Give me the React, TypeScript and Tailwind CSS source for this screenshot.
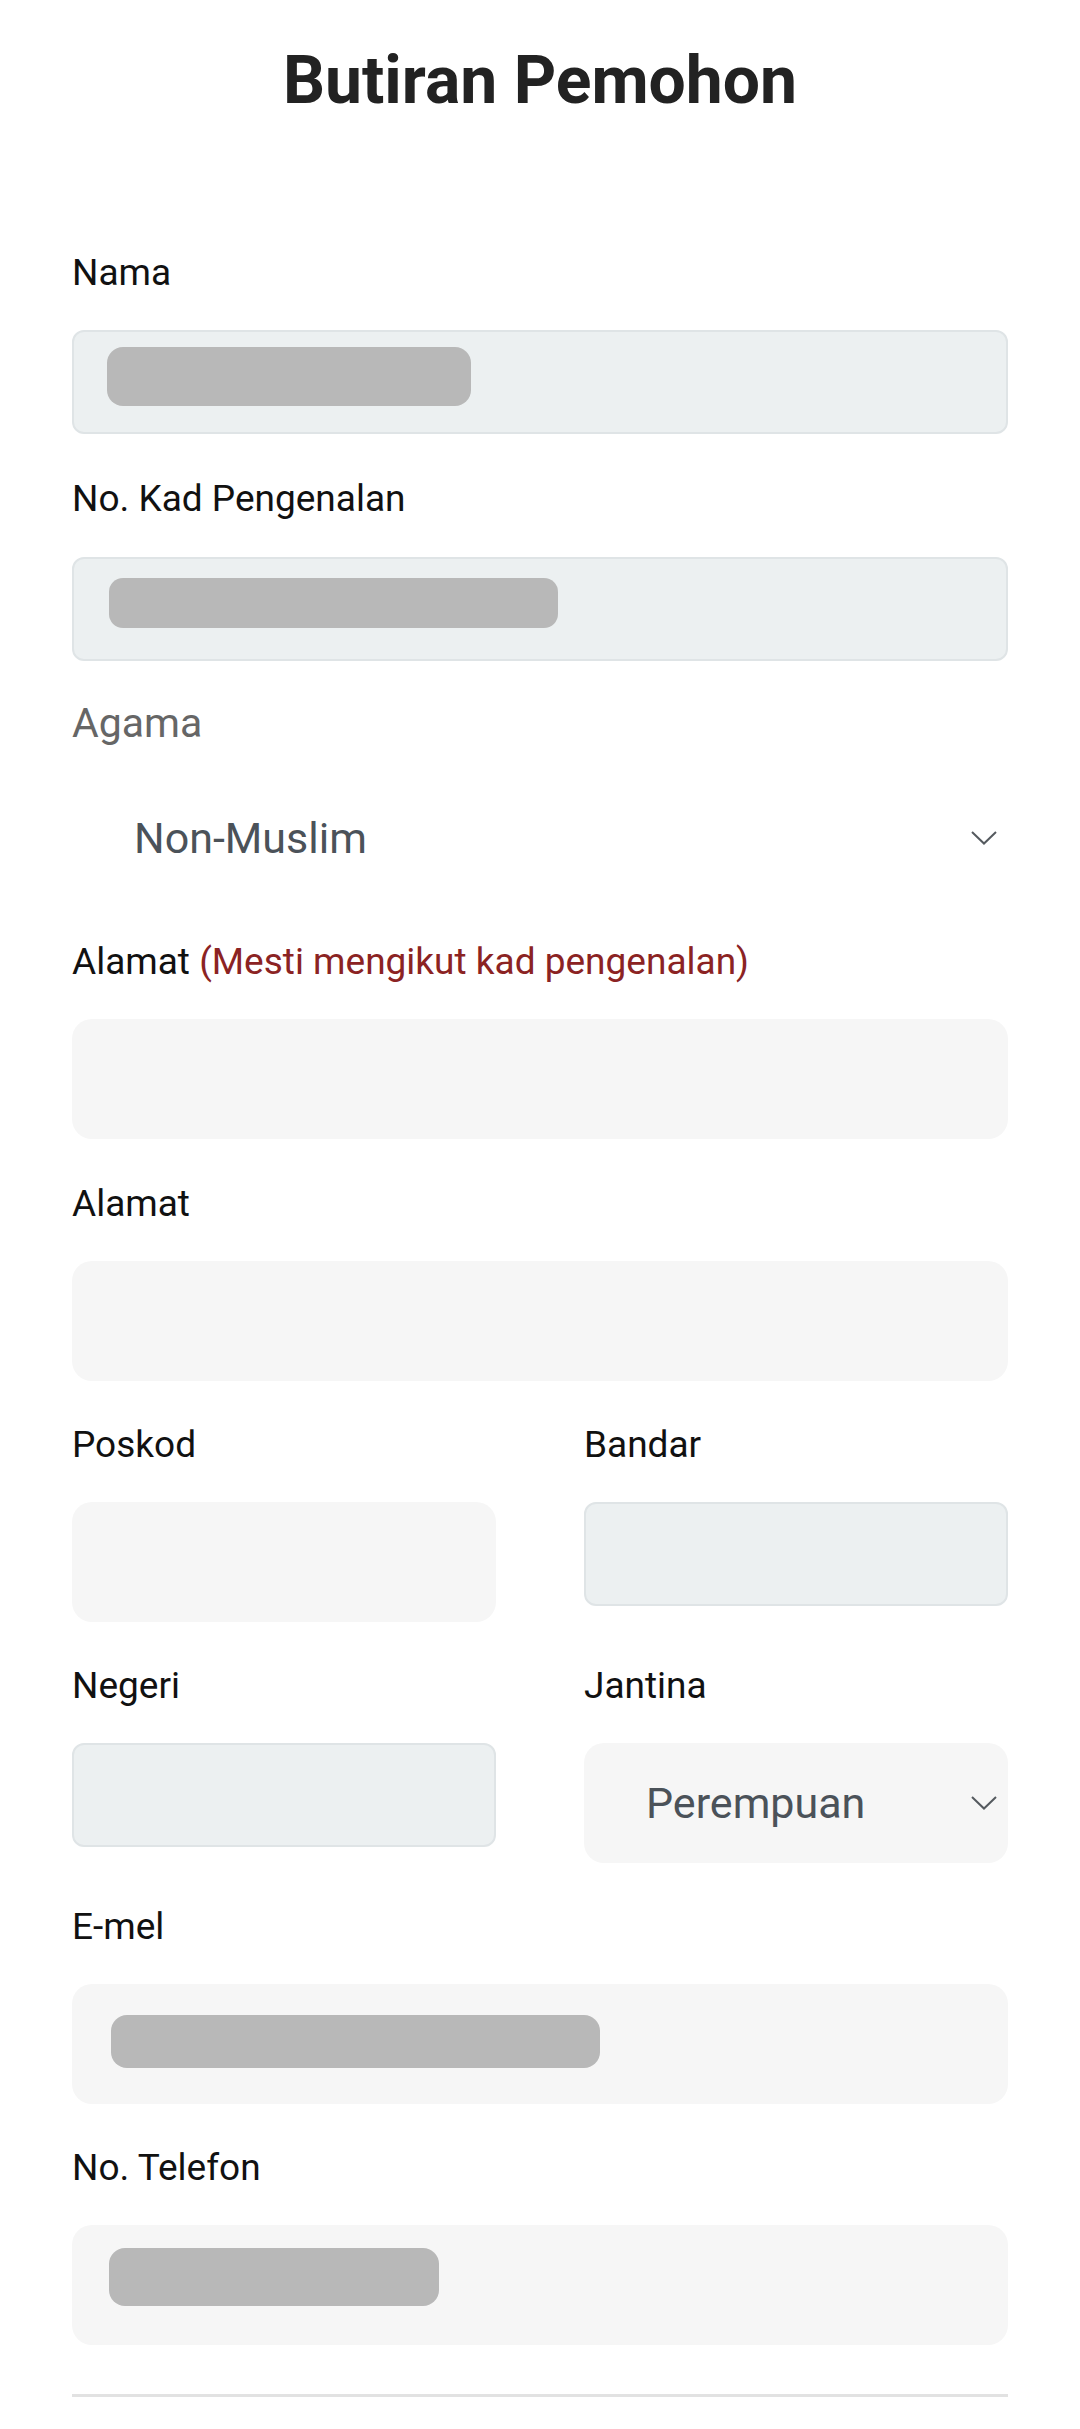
import React from "react";

const font = { fontFamily: "Roboto, 'Noto Sans', sans-serif" };

function Label({ children }: { children: React.ReactNode }) {
  return (
    <div className="text-[37px] leading-[48px] text-[#111]">{children}</div>
  );
}

function Chevron() {
  return (
    <svg width="26" height="14" viewBox="0 0 26 14" fill="none">
      <polyline
        points="1,1 13,12.5 25,1"
        stroke="#555a5f"
        strokeWidth="2"
        strokeLinejoin="miter"
      />
    </svg>
  );
}

function Select({ value, filled }: { value: string; filled?: boolean }) {
  return (
    <div
      className={`h-[120px] rounded-[20px] flex items-center pl-[62px] pr-[11px] ${
        filled ? "bg-[#f6f6f6]" : "bg-white"
      }`}
    >
      <span className="flex-1 text-[43px] text-[#4b5259]">{value}</span>
      <Chevron />
    </div>
  );
}

export default function App() {
  return (
    <div className="w-[1080px] min-h-[2429px] bg-white px-[72px]" style={font}>
      <h1 className="pt-[41px] text-center text-[66px] leading-[80px] font-bold text-[#222]">
        Butiran Pemohon
      </h1>

      <div className="mt-[128px]">
        <Label>Nama</Label>
        <div className="mt-[33px] h-[104px] rounded-[12px] border-2 border-[#dfe4e6] bg-[#ecf0f1] pl-[33px] pt-[15px]">
          <div className="w-[364px] h-[59px] rounded-[16px] bg-[#b8b8b8]" />
        </div>
      </div>

      <div className="mt-[41px]">
        <Label>No. Kad Pengenalan</Label>
        <div className="mt-[34px] h-[104px] rounded-[12px] border-2 border-[#dfe4e6] bg-[#ecf0f1] pl-[35px] pt-[19px]">
          <div className="w-[449px] h-[50px] rounded-[14px] bg-[#b8b8b8]" />
        </div>
      </div>

      <div className="mt-[35px]">
        <div className="text-[41px] leading-[54px] text-[#666]">Agama</div>
        <div className="mt-[28px]">
          <Select value="Non-Muslim" />
        </div>
      </div>

      <div className="mt-[40px]">
        <Label>
          Alamat{" "}
          <span className="text-[#8b2323]">(Mesti mengikut kad pengenalan)</span>
        </Label>
        <div className="mt-[33px] h-[120px] rounded-[20px] bg-[#f6f6f6]" />
      </div>

      <div className="mt-[41px]">
        <Label>Alamat</Label>
        <div className="mt-[33px] h-[120px] rounded-[20px] bg-[#f6f6f6]" />
      </div>

      <div className="mt-[40px] grid grid-cols-2 gap-x-[88px]">
        <div>
          <Label>Poskod</Label>
          <div className="mt-[33px] h-[120px] rounded-[20px] bg-[#f6f6f6]" />
        </div>
        <div>
          <Label>Bandar</Label>
          <div className="mt-[33px] h-[104px] rounded-[12px] border-2 border-[#dfe4e6] bg-[#ecf0f1]" />
        </div>
      </div>

      <div className="mt-[40px] grid grid-cols-2 gap-x-[88px]">
        <div>
          <Label>Negeri</Label>
          <div className="mt-[33px] h-[104px] rounded-[12px] border-2 border-[#dfe4e6] bg-[#ecf0f1]" />
        </div>
        <div>
          <Label>Jantina</Label>
          <div className="mt-[33px]">
            <Select value="Perempuan" filled />
          </div>
        </div>
      </div>

      <div className="mt-[40px]">
        <Label>E-mel</Label>
        <div className="mt-[33px] h-[120px] rounded-[20px] bg-[#f6f6f6] pl-[39px] pt-[31px]">
          <div className="w-[489px] h-[53px] rounded-[16px] bg-[#b8b8b8]" />
        </div>
      </div>

      <div className="mt-[40px]">
        <Label>No. Telefon</Label>
        <div className="mt-[33px] h-[120px] rounded-[20px] bg-[#f6f6f6] pl-[37px] pt-[23px]">
          <div className="w-[330px] h-[58px] rounded-[16px] bg-[#b8b8b8]" />
        </div>
      </div>

      <div className="mt-[49px] h-[3px] bg-[#e2e2e2]" />
    </div>
  );
}
